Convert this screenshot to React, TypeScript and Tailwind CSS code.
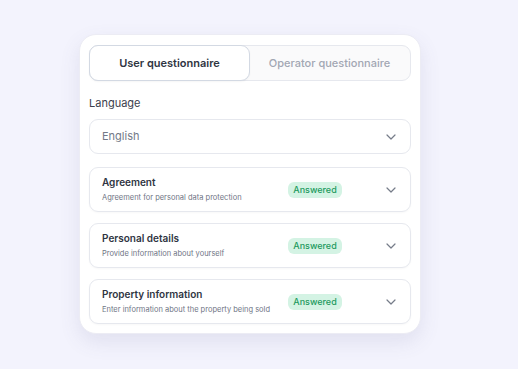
import React from "react";

function Chevron() {
  return (
    <svg width="10" height="6" viewBox="0 0 10 6" fill="none" className="shrink-0">
      <path d="M1 1l4 4 4-4" stroke="#767c89" strokeWidth="1.2" strokeLinecap="round" strokeLinejoin="round" />
    </svg>
  );
}

const items = [
  { title: "Agreement", sub: "Agreement for personal data protection" },
  { title: "Personal details", sub: "Provide information about yourself" },
  { title: "Property information", sub: "Enter information about the property being sold" },
];

export default function App() {
  return (
    <div
      className="w-[518px] h-[369px] bg-[#f3f3fd] overflow-hidden pt-[34px] pl-[79px]"
      style={{ fontFamily: "Inter, 'Noto Sans', sans-serif" }}
    >
      <div className="w-[342px] rounded-[17px] bg-white border border-[#ececf4] px-[9px] pt-[10px] pb-[9px] shadow-[0_8px_20px_rgba(90,90,140,0.12)]">
        <div className="flex h-[36px] rounded-[9px] border border-[#e6e8ee] bg-[#fafafb]">
          <div className="-m-px w-[161px] rounded-[9px] border border-[#d3d9e3] bg-white flex items-center justify-center text-[11px] font-semibold text-[#2f3542] shadow-[0_1px_2px_rgba(0,0,0,0.04)]">
            User questionnaire
          </div>
          <div className="flex-1 flex items-center justify-center text-[11px] font-medium text-[#a2a7b3]">
            Operator questionnaire
          </div>
        </div>
        <div className="mt-[15px] text-[11px] leading-[14px] text-[#3b404c]">Language</div>
        <div className="mt-[9px] h-[35px] rounded-[9px] border border-[#e6e8ee] flex items-center pl-[12px] pr-[14px]">
          <span className="flex-1 text-[11px] text-[#737987]">English</span>
          <Chevron />
        </div>
        <div className="mt-[13px] flex flex-col gap-[11px]">
          {items.map((it) => (
            <div
              key={it.title}
              className="h-[45px] rounded-[9px] border border-[#e6e8ee] flex items-center pl-[12px] pr-[14px] shadow-[0_1px_2px_rgba(0,0,0,0.03)]"
            >
              <div className="flex-1 min-w-0">
                <div className="text-[10px] leading-[13px] font-semibold text-[#2f3542]">{it.title}</div>
                <div className="mt-[4px] text-[7.5px] leading-[10px] text-[#6f7585]">{it.sub}</div>
              </div>
              <div className="w-[54px] h-[16px] rounded-[6px] bg-[#d4f3e4] flex items-center justify-center text-[9px] font-medium text-[#1c9a5e] mr-[44px]">
                Answered
              </div>
              <Chevron />
            </div>
          ))}
        </div>
      </div>
    </div>
  );
}
